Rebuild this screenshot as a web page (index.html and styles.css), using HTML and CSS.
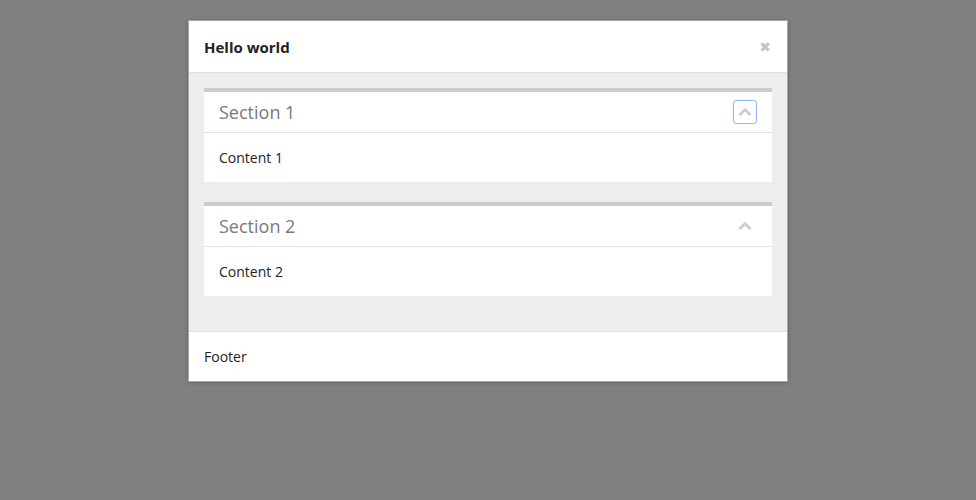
FILE: index.html
```html
<!DOCTYPE html>
<html>
<head>
<meta charset="utf-8">
<link rel="stylesheet" href="styles.css">
</head>
<body>
<div class="overlay">
  <div class="modal">
    <div class="modal-header">
      <span class="modal-title">Hello world</span>
      <span class="close">&#x2716;</span>
    </div>
    <div class="modal-body">
      <div class="section">
        <div class="section-header">
          <span class="section-title">Section 1</span>
          <span class="toggle focused"><svg width="14" height="10" viewBox="0 0 14 10"><path d="M1.5 8 L7 2.5 L12.5 8" fill="none" stroke="#cccccc" stroke-width="2.6"/></svg></span>
        </div>
        <div class="section-content">Content 1</div>
      </div>
      <div class="section">
        <div class="section-header">
          <span class="section-title">Section 2</span>
          <span class="toggle"><svg width="14" height="10" viewBox="0 0 14 10"><path d="M1.5 8 L7 2.5 L12.5 8" fill="none" stroke="#cccccc" stroke-width="2.6"/></svg></span>
        </div>
        <div class="section-content">Content 2</div>
      </div>
    </div>
    <div class="modal-footer">Footer</div>
  </div>
</div>
</body>
</html>
```
FILE: styles.css
```css
html, body {
  margin: 0;
  padding: 0;
}
body {
  background: #808080;
  font-family: "Open Sans", "Lato", sans-serif;
  width: 976px;
  height: 500px;
  overflow: hidden;
}
.overlay {
  display: flex;
  justify-content: center;
  padding-top: 20px;
}
.modal {
  width: 598px;
  background: #fff;
  border: 1px solid #a8a8a8;
  box-shadow: 0 1px 4px rgba(0,0,0,0.25);
  display: flex;
  flex-direction: column;
}
.modal-header {
  height: 51px;
  display: flex;
  align-items: center;
  justify-content: space-between;
  padding: 0 15px;
  border-bottom: 1px solid #dedede;
}
.modal-title {
  font-weight: 700;
  font-size: 15px;
  color: #222;
}
.close {
  color: #c4c4c4;
  font-size: 14px;
  font-weight: bold;
  font-family: "DejaVu Sans", sans-serif;
  margin-right: 1px;
}
.modal-body {
  background: #ededed;
  padding: 15px 15px 16px;
  display: flex;
  flex-direction: column;
  gap: 20px;
  height: 227px;
}
.section {
  background: #fff;
  border-top: 4px solid #cccccc;
}
.section-header {
  height: 40px;
  display: flex;
  align-items: center;
  justify-content: space-between;
  padding: 0 15px;
  border-bottom: 1px solid #e3e3e3;
}
.section-title {
  font-size: 18px;
  color: #7a7a7a;
}
.toggle {
  width: 22px;
  height: 22px;
  display: flex;
  align-items: center;
  justify-content: center;
  border: 1px solid transparent;
  border-radius: 3px;
}
.toggle.focused {
  border-color: #8fb4ff;
}
.section-content {
  height: 49px;
  display: flex;
  align-items: center;
  padding: 0 15px;
  font-size: 14px;
  color: #222;
}
.modal-footer {
  height: 49px;
  border-top: 1px solid #dedede;
  display: flex;
  align-items: center;
  padding: 0 15px;
  font-size: 14px;
  color: #222;
}
```
